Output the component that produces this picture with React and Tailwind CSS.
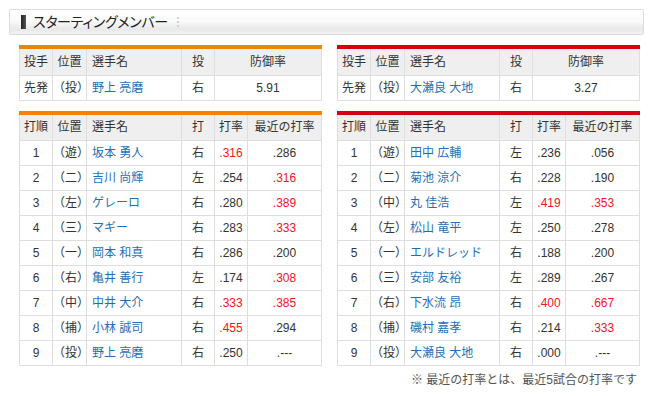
import React from "react";

const FONT = "[font-family:'Liberation_Sans','Noto_Sans_CJK_JP',sans-serif]";

const home = {
  color: "border-t-[#f08300]",
  pitcher: { pos: "（投）", name: "野上 亮磨", hand: "右", era: "5.91" },
  batters: [
    ["1", "（遊）", "坂本 勇人", "右", ".316", true, ".286", false],
    ["2", "（二）", "吉川 尚輝", "左", ".254", false, ".316", true],
    ["3", "（左）", "ゲレーロ", "右", ".280", false, ".389", true],
    ["4", "（三）", "マギー", "右", ".283", false, ".333", true],
    ["5", "（一）", "岡本 和真", "右", ".286", false, ".200", false],
    ["6", "（右）", "亀井 善行", "左", ".174", false, ".308", true],
    ["7", "（中）", "中井 大介", "右", ".333", true, ".385", true],
    ["8", "（捕）", "小林 誠司", "右", ".455", true, ".294", false],
    ["9", "（投）", "野上 亮磨", "右", ".250", false, ".---", false],
  ],
};

const away = {
  color: "border-t-[#d7000f]",
  pitcher: { pos: "（投）", name: "大瀬良 大地", hand: "右", era: "3.27" },
  batters: [
    ["1", "（遊）", "田中 広輔", "左", ".236", false, ".056", false],
    ["2", "（二）", "菊池 涼介", "右", ".228", false, ".190", false],
    ["3", "（中）", "丸 佳浩", "左", ".419", true, ".353", true],
    ["4", "（左）", "松山 竜平", "左", ".250", false, ".278", false],
    ["5", "（一）", "エルドレッド", "右", ".188", false, ".200", false],
    ["6", "（三）", "安部 友裕", "左", ".289", false, ".267", false],
    ["7", "（右）", "下水流 昂", "右", ".400", true, ".667", true],
    ["8", "（捕）", "磯村 嘉孝", "右", ".214", false, ".333", true],
    ["9", "（投）", "大瀬良 大地", "右", ".000", false, ".---", false],
  ],
};

const th = "h-[26px] bg-[#efefef] border border-[#dedede] border-t-0 font-normal text-[#333] text-[12px] p-0";
const td = "h-[25px] bg-white border border-[#dedede] text-[12px] p-0";
const dark = "text-[#333]";
const blue = "text-[#1f6fb6]";
const red = "text-[#f0141e]";

function PitcherTable({ team }) {
  const p = team.pitcher;
  return (
    <div className={`border-t-[4px] ${team.color}`}>
      <table className="w-[302px] table-fixed border-collapse">
        <colgroup>
          <col className="w-[33px]" />
          <col className="w-[34px]" />
          <col className="w-[95px]" />
          <col className="w-[33px]" />
          <col className="w-[107px]" />
        </colgroup>
        <thead>
          <tr>
            <th className={`${th} text-center`}>投手</th>
            <th className={`${th} text-center`}>位置</th>
            <th className={`${th} text-left pl-[5px]`}>選手名</th>
            <th className={`${th} text-center`}>投</th>
            <th className={`${th} text-center`}>防御率</th>
          </tr>
        </thead>
        <tbody>
          <tr>
            <td className={`${td} ${dark} text-center`}>先発</td>
            <td className={`${td} ${dark} text-center`}>{p.pos}</td>
            <td className={`${td} ${blue} text-left pl-[5px]`}>{p.name}</td>
            <td className={`${td} ${dark} text-center`}>{p.hand}</td>
            <td className={`${td} ${dark} text-center`}>{p.era}</td>
          </tr>
        </tbody>
      </table>
    </div>
  );
}

function BattingTable({ team }) {
  return (
    <div className={`border-t-[4px] ${team.color}`}>
      <table className="w-[302px] table-fixed border-collapse">
        <colgroup>
          <col className="w-[33px]" />
          <col className="w-[34px]" />
          <col className="w-[95px]" />
          <col className="w-[33px]" />
          <col className="w-[33px]" />
          <col className="w-[74px]" />
        </colgroup>
        <thead>
          <tr>
            <th className={`${th} text-center`}>打順</th>
            <th className={`${th} text-center`}>位置</th>
            <th className={`${th} text-left pl-[5px]`}>選手名</th>
            <th className={`${th} text-center`}>打</th>
            <th className={`${th} text-center`}>打率</th>
            <th className={`${th} text-center`}>最近の打率</th>
          </tr>
        </thead>
        <tbody>
          {team.batters.map((b) => (
            <tr key={b[0]}>
              <td className={`${td} ${dark} text-center`}>{b[0]}</td>
              <td className={`${td} ${dark} text-center`}>{b[1]}</td>
              <td className={`${td} ${blue} text-left pl-[5px]`}>{b[2]}</td>
              <td className={`${td} ${dark} text-center`}>{b[3]}</td>
              <td className={`${td} ${b[5] ? red : dark} text-center`}>{b[4]}</td>
              <td className={`${td} ${b[7] ? red : dark} text-center`}>{b[6]}</td>
            </tr>
          ))}
        </tbody>
      </table>
    </div>
  );
}

export default function App() {
  return (
    <div className={`w-[650px] h-[396px] bg-white overflow-hidden ${FONT}`}>
      <div className="pt-[9px] pl-[9px]">
        <div className="w-[635px] h-[26px] border border-[#dcdcdc] rounded-[2px] bg-[linear-gradient(#ffffff_0%,#fafafa_45%,#e9e9e9_80%,#f2f2f2_100%)] flex items-center">
          <div className="ml-[11px] w-[5px] h-[14px] bg-[linear-gradient(90deg,#222,#555)]" />
          <div className="ml-[7px] text-[14px] leading-none text-[#222] tracking-[-0.3px] [font-feature-settings:'palt']">
            スターティングメンバー
          </div>
          <div className="ml-[9px] flex flex-col gap-[2px]">
            <span className="w-[2px] h-[2px] bg-[#d0d0d0]" />
            <span className="w-[2px] h-[2px] bg-[#d0d0d0]" />
            <span className="w-[2px] h-[2px] bg-[#d0d0d0]" />
          </div>
        </div>
      </div>
      <div className="pl-[19px] mt-[10px] flex gap-[15px]">
        <PitcherTable team={home} />
        <PitcherTable team={away} />
      </div>
      <div className="pl-[19px] mt-[10px] flex gap-[15px]">
        <BattingTable team={home} />
        <BattingTable team={away} />
      </div>
      <div className="w-[637px] text-right text-[12px] text-[#555] mt-[5px]">
        ※ 最近の打率とは、最近5試合の打率です
      </div>
    </div>
  );
}
